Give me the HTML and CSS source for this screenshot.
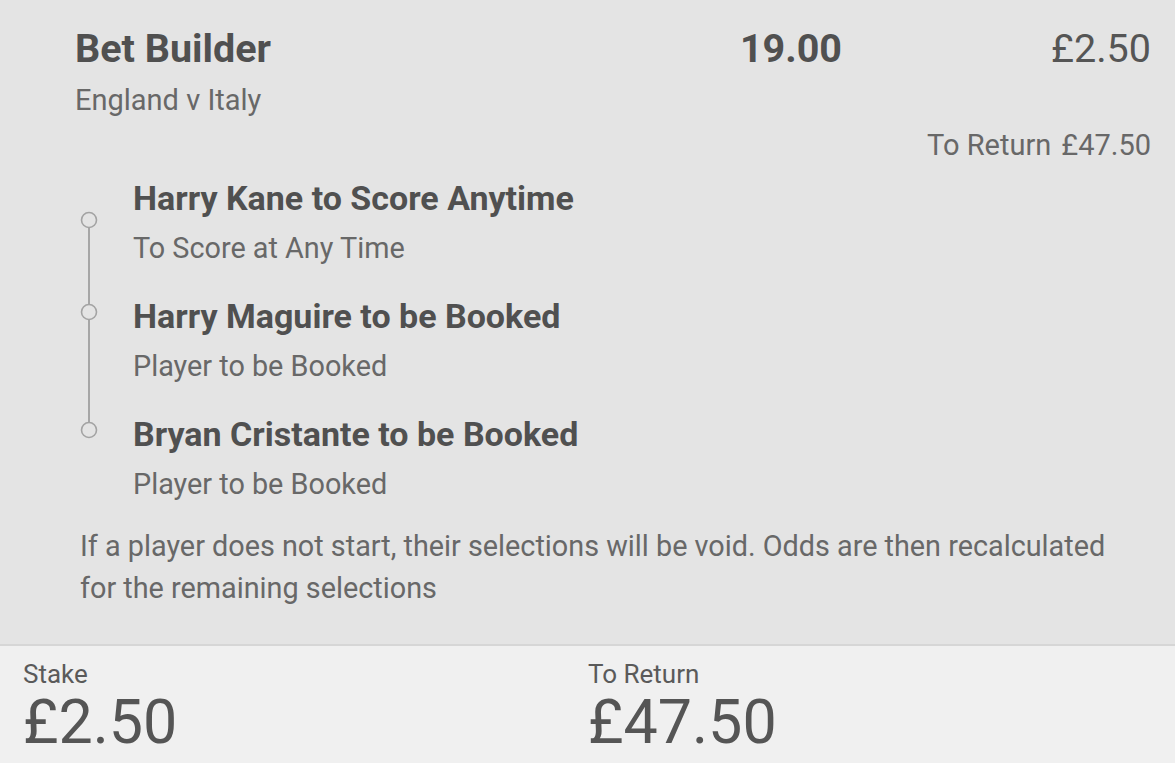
FILE: index.html
```html
<!DOCTYPE html>
<html lang="en">
<head>
<meta charset="utf-8">
<title>Bet Builder</title>
<link rel="stylesheet" href="styles.css">
</head>
<body>
<div class="slip">
  <section class="bet">
    <div class="bet-head">
      <div class="bet-info">
        <div class="bet-title">Bet Builder</div>
        <div class="bet-event">England v Italy</div>
      </div>
      <div class="bet-odds">19.00</div>
      <div class="bet-stake">£2.50</div>
    </div>
    <div class="bet-return"><span>To Return</span><span>£47.50</span></div>
    <div class="legs">
      <svg class="timeline" width="30" height="270" viewBox="0 0 30 270" aria-hidden="true">
        <line x1="14" y1="50" x2="14" y2="126" stroke="#a6a6a6" stroke-width="2"/>
        <line x1="14" y1="142" x2="14" y2="244" stroke="#a6a6a6" stroke-width="2"/>
        <circle cx="14" cy="42" r="7.5" fill="none" stroke="#a3a3a3" stroke-width="1.6"/>
        <circle cx="14" cy="134" r="7.5" fill="none" stroke="#a3a3a3" stroke-width="1.6"/>
        <circle cx="14" cy="252" r="7.5" fill="none" stroke="#a3a3a3" stroke-width="1.6"/>
      </svg>
      <ul class="leg-list">
        <li class="leg">
          <div class="leg-title">Harry Kane to Score Anytime</div>
          <div class="leg-market">To Score at Any Time</div>
        </li>
        <li class="leg">
          <div class="leg-title">Harry Maguire to be Booked</div>
          <div class="leg-market">Player to be Booked</div>
        </li>
        <li class="leg">
          <div class="leg-title">Bryan Cristante to be Booked</div>
          <div class="leg-market">Player to be Booked</div>
        </li>
      </ul>
    </div>
    <p class="disclaimer">If a player does not start, their selections will be void. Odds are then recalculated for the remaining selections</p>
  </section>
  <footer class="totals">
    <div class="total">
      <div class="total-label">Stake</div>
      <div class="total-value">£2.50</div>
    </div>
    <div class="total">
      <div class="total-label">To Return</div>
      <div class="total-value">£47.50</div>
    </div>
  </footer>
</div>
</body>
</html>
```
FILE: styles.css
```css
html, body {
  margin: 0;
  padding: 0;
}
body {
  font-family: Roboto, "Liberation Sans", sans-serif;
  background: #f0f0f0;
  color: #555555;
  width: 1175px;
  height: 763px;
  overflow: hidden;
}
.slip {
  display: flex;
  flex-direction: column;
  height: 763px;
}
.bet {
  flex: none;
  background: #e4e4e4;
  padding: 25px 24px 0 75px;
  height: 644px;
  box-sizing: border-box;
}
.bet-head {
  display: grid;
  grid-template-columns: 1fr auto 309px;
  align-items: start;
}
.bet-title,
.bet-odds {
  font-size: 39.5px;
  font-weight: 700;
  line-height: 48px;
  color: #505050;
}
.bet-stake {
  font-size: 39.5px;
  font-weight: 400;
  line-height: 48px;
  text-align: right;
  color: #555555;
}
.bet-event {
  font-size: 29px;
  line-height: 36px;
  color: #686868;
  margin-top: 9px;
}
.bet-return {
  display: flex;
  justify-content: flex-end;
  gap: 10px;
  font-size: 29px;
  line-height: 36px;
  color: #686868;
  margin-top: 9px;
}
.legs {
  display: flex;
  margin-top: 15px;
}
.timeline {
  flex: none;
}
.leg-list {
  list-style: none;
  margin: 0 0 0 28px;
  padding: 0;
}
.leg {
  margin-bottom: 30px;
}
.leg:last-child {
  margin-bottom: 0;
}
.leg-title {
  font-size: 34px;
  font-weight: 700;
  line-height: 40px;
  color: #505050;
}
.leg-market {
  font-size: 28.8px;
  line-height: 36px;
  color: #686868;
  margin-top: 12px;
}
.disclaimer {
  margin: 23px 30px 0 5px;
  font-size: 28.8px;
  line-height: 42px;
  color: #686868;
}
.totals {
  flex: 1;
  display: grid;
  grid-template-columns: 565px 1fr;
  padding: 0 23px;
  border-top: 2px solid #d6d6d6;
  background: #f0f0f0;
}
.total-label {
  font-size: 26px;
  line-height: 26px;
  margin-top: 15px;
  color: #5a5a5a;
}
.total-value {
  font-size: 61px;
  line-height: 68px;
  margin-top: 1px;
  color: #555555;
}
```
